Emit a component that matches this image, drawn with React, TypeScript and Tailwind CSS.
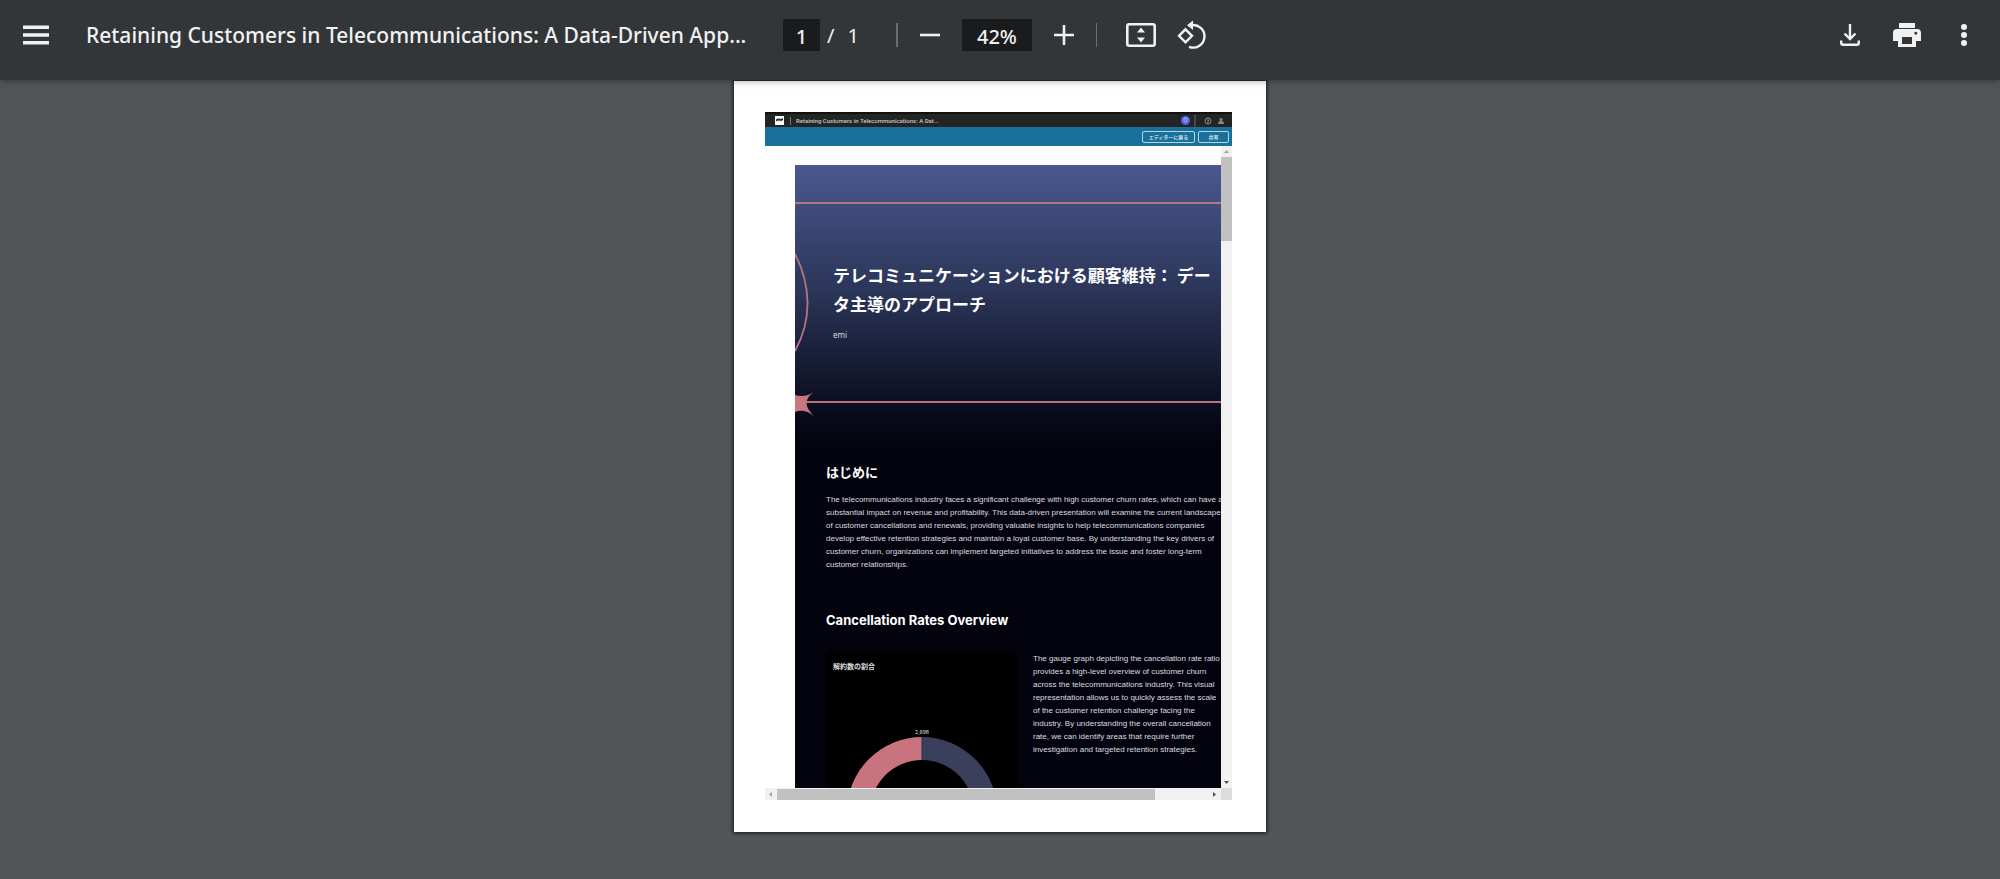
import React from 'react';

const HERO_TITLE = 'テレコミュニケーションにおける顧客維持： データ主導のアプローチ';

const INTRO_LINES = [
  'The telecommunications industry faces a significant challenge with high customer churn rates, which can have a',
  'substantial impact on revenue and profitability. This data-driven presentation will examine the current landscape',
  'of customer cancellations and renewals, providing valuable insights to help telecommunications companies',
  'develop effective retention strategies and maintain a loyal customer base. By understanding the key drivers of',
  'customer churn, organizations can implement targeted initiatives to address the issue and foster long-term',
  'customer relationships.'
];

const OVERVIEW_LINES = [
  'The gauge graph depicting the cancellation rate ratio',
  'provides a high-level overview of customer churn',
  'across the telecommunications industry. This visual',
  'representation allows us to quickly assess the scale',
  'of the customer retention challenge facing the',
  'industry. By understanding the overall cancellation',
  'rate, we can identify areas that require further',
  'investigation and targeted retention strategies.'
];

interface LinesProps {
  lines: string[];
}

// Paragraph with fixed line breaks
const Lines: React.FC<LinesProps> = ({ lines }) => (
  <p className="font-['Liberation_Sans',sans-serif] text-[8px] leading-[13px] whitespace-nowrap text-[#dcdce0]">
    {lines.map((line) => (
      <span key={line} className="block">{line}</span>
    ))}
  </p>
);

const Toolbar: React.FC = () => (
  <header className="relative z-10 flex h-20 shrink-0 items-start bg-[#323639] pt-[17px] font-['Noto_Sans',sans-serif] text-[#f1f1f1] shadow-[0_0_8px_rgba(0,0,0,0.45)]">
    <div className="flex h-9 w-full items-center">
      <button aria-label="Menu" className="ml-[22px]">
        <svg width="28" height="22" viewBox="0 0 28 22" fill="currentColor" className="block">
          <path d="M1 1.500h26v3.500H1zM1 9.300h26v3.500H1zM1 17.100h26v3.500H1z" />
        </svg>
      </button>
      <h1 className="ml-9 w-[676px] truncate pt-[2px] text-[21px] font-medium">
        Retaining Customers in Telecommunications: A Data-Driven App...
      </h1>
      <input
        aria-label="Page number"
        defaultValue="1"
        className="ml-[21px] h-8 w-[37px] bg-[#191b1c] pt-[2px] text-center text-[20px] font-medium"
      />
      <span className="ml-[7px] pt-[2px] text-[20px]">/</span>
      <span className="ml-[13px] pt-[2px] text-[20px]">1</span>
      <span className="ml-[37px] h-6 w-[2px] bg-[#6b6e70]" />
      <button aria-label="Zoom out" className="ml-[22px]">
        <svg width="20" height="20" viewBox="0 0 20 20" fill="currentColor" className="block">
          <path d="M0 8.7h20v2.6H0z" />
        </svg>
      </button>
      <input
        aria-label="Zoom level"
        defaultValue="42%"
        className="ml-[22px] h-8 w-[70px] bg-[#191b1c] pt-[2px] text-center text-[20px] font-medium"
      />
      <button aria-label="Zoom in" className="ml-[22px]">
        <svg width="20" height="20" viewBox="0 0 20 20" fill="currentColor" className="block">
          <path d="M8.7 0h2.6v8.7H20v2.6h-8.7V20H8.7v-8.7H0V8.7h8.7z" />
        </svg>
      </button>
      <span className="ml-[22px] h-6 w-px bg-[#6b6e70]" />
      <button aria-label="Fit to page" className="ml-[29px]">
        <svg width="30" height="24" viewBox="0 0 30 24" fill="none" className="block">
          <rect x="1.3" y="1.3" width="27.4" height="21.4" rx="2" stroke="currentColor" strokeWidth="2.6" />
          <path d="M15 4.5l4 5h-8zM15 19.5l4-5h-8z" fill="currentColor" />
        </svg>
      </button>
      <button aria-label="Rotate" className="ml-5">
        <svg width="30" height="30" viewBox="0 0 30 30" fill="none" stroke="currentColor" strokeWidth="2.4" className="block">
          <path d="M9.5 9.3L16 15.8 9.5 22.3 3 15.8z" />
          <path d="M15 5.2a11.3 11.3 0 1 1-2 21.6" />
          <path d="M17 0.5v9.4L11 5.2z" fill="currentColor" stroke="none" />
        </svg>
      </button>
      <div className="mr-[32px] ml-auto flex items-center">
        <button aria-label="Download">
          <svg width="20" height="22" viewBox="0 0 20 22" fill="none" stroke="currentColor" strokeWidth="2.4" className="block">
            <path d="M10 0v14M4.5 9.5l5.5 5.5 5.5-5.5" />
            <path d="M1.2 16.5v2.3q0 2 2 2h13.6q2 0 2-2v-2.3" />
          </svg>
        </button>
        <button aria-label="Print" className="ml-[33px]">
          <svg width="28" height="26" viewBox="0 0 28 26" fill="currentColor" className="block">
            <path d="M6 1h16v5H6z" />
            <path fillRule="evenodd" d="M4 7h20q4 0 4 4v8h-5v6H5v-6H0v-8q0-4 4-4zm5 8v7h10v-7zM22.800 9.800a1.500 1.500 0 1 0 .01 0z" />
          </svg>
        </button>
        <button aria-label="More actions" className="ml-[39px]">
          <svg width="8" height="24" viewBox="0 0 8 24" fill="currentColor" className="block">
            <circle cx="4" cy="4" r="3" />
            <circle cx="4" cy="12" r="3" />
            <circle cx="4" cy="20" r="3" />
          </svg>
        </button>
      </div>
    </div>
  </header>
);

const AppBar: React.FC = () => (
  <>
    <div className="flex h-[15px] items-center border-t-2 border-[#111] bg-[#242424] pr-2 pl-[10px] text-[#c9c9c9]">
      <svg width="9" height="9" viewBox="0 0 9 9" className="block">
        <path d="M0 0h9v9H0z" fill="#fff" />
        <path d="M1 5.500V3.500L3.500 2v1.500L5.500 2v1.500L8 2v2L5.500 5.500V4L3.500 5.500V4z" fill="#222" />
      </svg>
      <span className="ml-[6px] h-2 w-px bg-[#777]" />
      <span className="ml-[5px] font-['Roboto',sans-serif] text-[6px] leading-[10px] font-medium">
        Retaining Customers in Telecommunications: A Dat...
      </span>
      <svg width="9" height="9" viewBox="0 0 9 9" className="ml-auto block">
        <circle cx="4.5" cy="4.5" r="4.500" fill="#5b62e0" />
        <path d="M3 2.500v2.500l1.500 1.500L6 5V2.500L4.500 2z" fill="none" stroke="#a5dcf5" strokeWidth="0.800" />
      </svg>
      <span className="ml-1 h-3 w-[2px] bg-[#484848]" />
      <svg width="8" height="8" viewBox="0 0 8 8" fill="none" stroke="#8a8a8a" className="ml-2 block">
        <circle cx="4" cy="4" r="3" />
        <path d="M3 3h2L4 4.500V6" />
      </svg>
      <svg width="6" height="8" viewBox="0 0 6 8" fill="#8a8a8a" className="ml-[6px] block">
        <circle cx="3" cy="2.500" r="1.500" />
        <path d="M0 7q0-3 3-3t3 3z" />
      </svg>
    </div>
    <div className="flex h-[19px] items-center justify-end gap-[3px] bg-[#19719b] pr-[3px]">
      <button className="h-3 w-[53px] rounded-[2px] border border-[#b5d6e4] text-[5px] leading-[10px] font-medium text-[#e3f0f5]">
        エディターに戻る
      </button>
      <button className="h-3 w-[31px] rounded-[2px] border border-[#b5d6e4] text-[5px] leading-[10px] font-medium text-[#e3f0f5]">
        共有
      </button>
    </div>
  </>
);

const Hero: React.FC = () => (
  <section className="relative h-[285px] bg-linear-to-b from-[#4a588e] via-[#2b3558] via-45% to-[#03030d] pt-[37px]">
    <div className="h-[2px] bg-[#b8747c]" />
    <div className="h-[197px] pt-[58px] pl-[38px]">
      <h2 className="w-[385px] text-[17px] leading-[29px] font-bold break-all text-white">{HERO_TITLE}</h2>
      <p className="mt-2 font-['Noto_Sans',sans-serif] text-[8px] leading-[13px] text-[#dcdce0]">emi</p>
    </div>
    <div className="h-[2px] bg-[#b8747c]" />
    <svg width="20" height="180" viewBox="0 0 20 180" fill="none" className="absolute top-[80px] left-0">
      <path d="M0 9Q12 32 12.500 57T0 106" stroke="#b8747c" strokeWidth="1.800" />
      <path d="M0 150Q10 153 19 147Q4 157 19 171Q9 163 0 167z" fill="#ca7681" />
    </svg>
  </section>
);

const GaugeCard: React.FC = () => (
  <div className="w-[191px] shrink-0 bg-black pt-2 pl-[7px]">
    <h4 className="text-[7px] leading-[13px] font-bold text-[#ddd]">解約数の割合</h4>
    <svg width="180" height="120" viewBox="0 0 180 120" className="block">
      <text x="89" y="61" textAnchor="middle" fontSize="5" fontWeight="500" fill="#ccc">2,698</text>
      <path d="M14 139A75 75 0 0 1 89 64V87A52 52 0 0 0 37 139Z" fill="#c9737f" />
      <path d="M164 139A75 75 0 0 0 89 64V87A52 52 0 0 1 141 139Z" fill="#3a405c" />
      <path d="M89 64V87" stroke="#123a55" />
    </svg>
  </div>
);

const Arrow: React.FC<{ d: string; color: string }> = ({ d, color }) => (
  <svg width="11" height="11" viewBox="0 0 11 11" fill={color} className="block shrink-0">
    <path d={d} />
  </svg>
);

const ReportPage: React.FC = () => (
  <article className="w-[532px] bg-white pt-[31px] pr-[34px] pb-8 pl-[31px] shadow-[0_0_4px_1px_rgba(0,0,0,0.75)]">
    <AppBar />
    <div className="flex h-[642px]">
      <div className="min-w-0 flex-1 overflow-hidden pt-[19px] pl-[30px]">
        <div className="h-[623px] overflow-hidden bg-[#03030d]">
          <Hero />
          <section className="pl-[31px]">
            <h3 className="pt-[13px] text-[13px] leading-[18px] font-bold text-white">はじめに</h3>
            <div className="pt-3">
              <Lines lines={INTRO_LINES} />
            </div>
            <h3 className="pt-10 text-[13px] leading-[18px] font-bold text-white">Cancellation Rates Overview</h3>
            <div className="flex gap-4 pt-[23px]">
              <GaugeCard />
              <Lines lines={OVERVIEW_LINES} />
            </div>
          </section>
        </div>
      </div>
      <div className="flex w-[11px] flex-col bg-[#f1f1f1]">
        <Arrow d="M3 7l2.500-3L8 7z" color="#a3a3a3" />
        <div className="h-[84px] bg-[#c1c1c1]" />
        <div className="mt-auto">
          <Arrow d="M3 4l2.500 3L8 4z" color="#505050" />
        </div>
      </div>
    </div>
    <div className="flex h-3 items-center gap-px bg-[#f1f1f1]">
      <Arrow d="M7 3L4 5.500 7 8z" color="#a3a3a3" />
      <div className="h-[11px] w-[378px] bg-[#c1c1c1]" />
      <div className="ml-auto">
        <Arrow d="M4 3l3 2.500L4 8z" color="#505050" />
      </div>
      <div className="h-3 w-[11px] bg-[#dcdcdc]" />
    </div>
  </article>
);

export default function App() {
  return (
    <div className="flex min-h-screen flex-col bg-[#525659] font-[Inter,'Noto_Sans_CJK_JP',sans-serif]">
      <Toolbar />
      <main className="flex flex-1 items-start justify-center pt-px pb-12">
        <ReportPage />
      </main>
    </div>
  );
}
